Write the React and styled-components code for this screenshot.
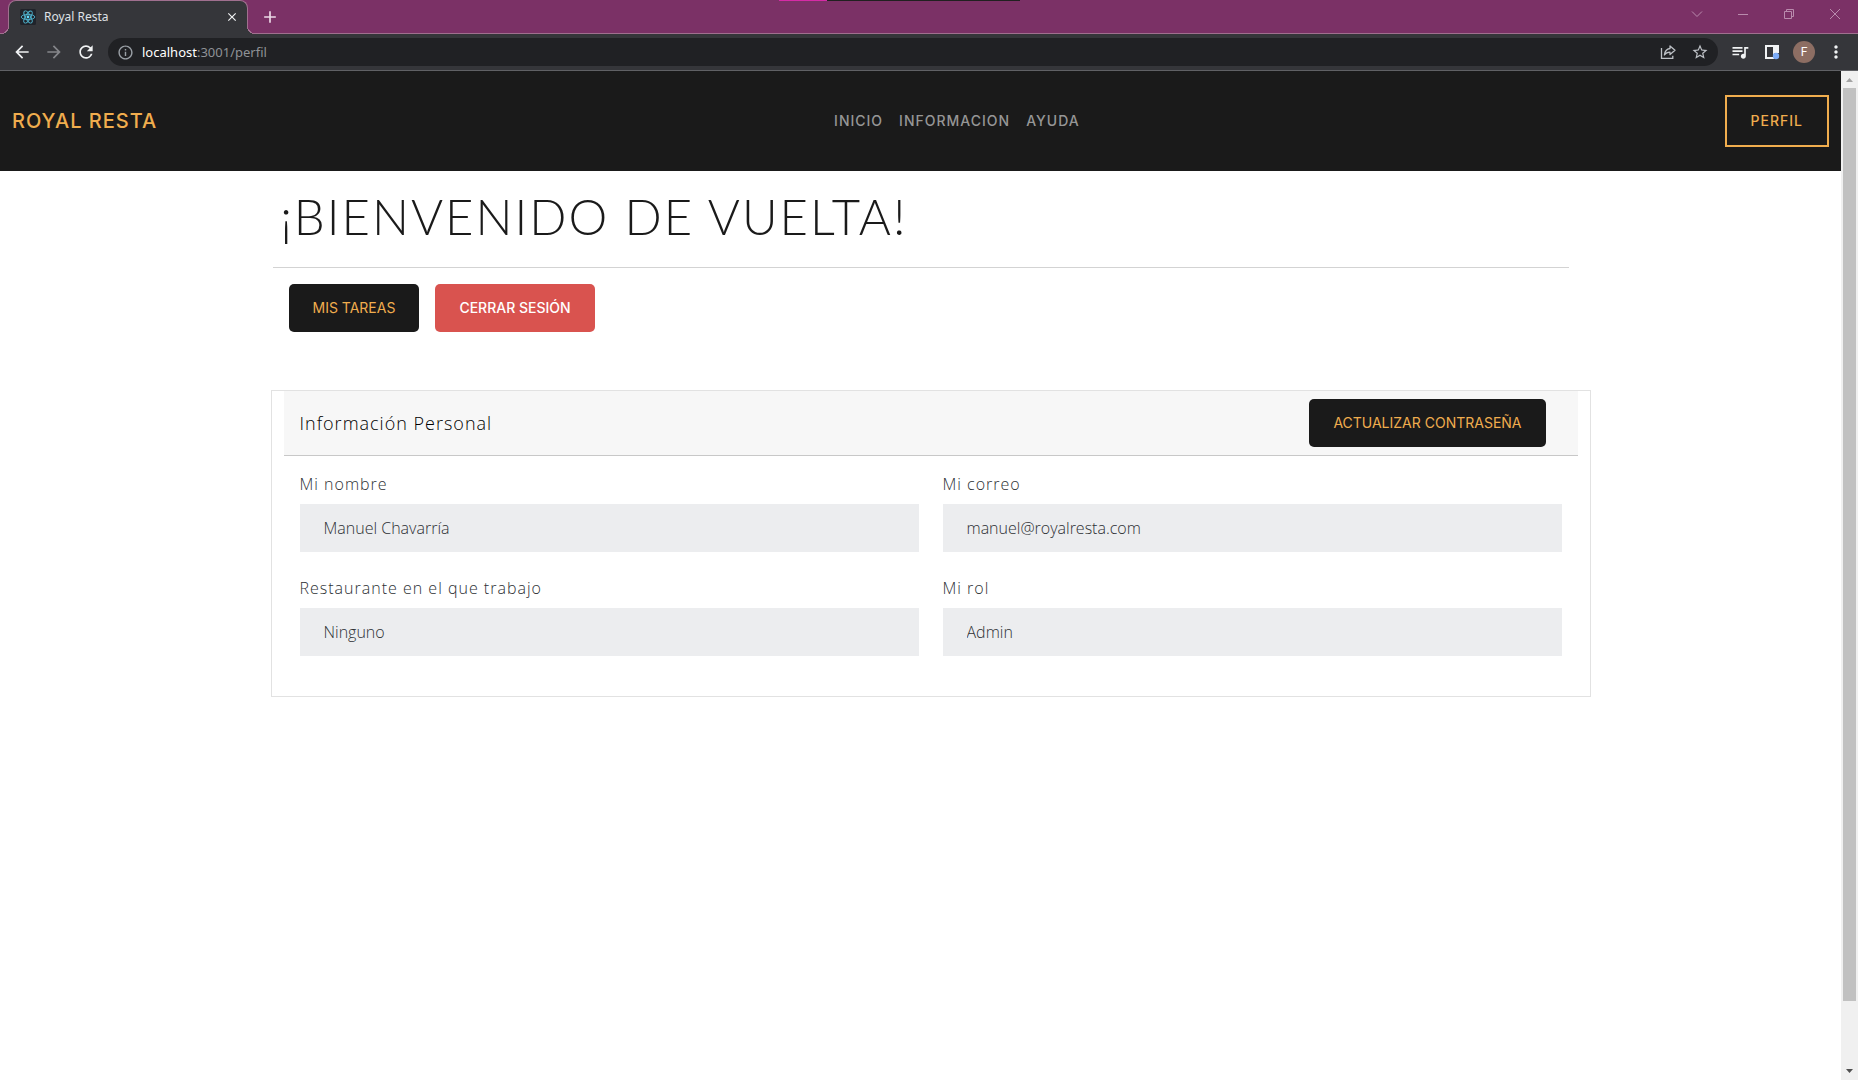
import React, { useId } from 'react';
import styled, { createGlobalStyle } from 'styled-components';
import { MdArrowBack, MdArrowForward, MdRefresh, MdInfoOutline, MdStarBorder, MdMoreVert, MdClose, MdAdd, MdQueueMusic } from 'react-icons/md';

const color = {
  frame: '#7b3166',
  frameLine: '#a0708f',
  toolbar: '#35363a',
  omnibox: '#202124',
  dark: '#1a1a1a',
  gold: '#f0ad4e',
  danger: '#d9534f',
  text: '#2c3034',
};
const uiFont = '"Noto Sans", "Open Sans", sans-serif';
const bodyFont = '"Open Sans", "Noto Sans", sans-serif';
const capsFont = 'Inter, "Open Sans", sans-serif';

const GlobalStyle = createGlobalStyle`
  *, *::before, *::after { box-sizing: border-box; }
  body { margin: 0; background: #fff; font-family: ${bodyFont}; }
  button { font: inherit; cursor: pointer; }
`;

const Browser = styled.div`
  display: flex;
  flex-direction: column;
  height: 100vh;
`;

const TabStrip = styled.header`
  position: relative;
  display: flex;
  align-items: stretch;
  height: 34px;
  flex: none;
  padding-left: 8px;
  background: ${color.frame};
  box-shadow: inset 0 -1px ${color.frameLine};
`;

const Glimpse = styled.div`
  position: absolute;
  top: 0;
  left: 41.9%;
  width: 13%;
  height: 1px;
  background: linear-gradient(to right, #d62ba6 20%, #202020 20%);
`;

const Tab = styled.div`
  position: relative;
  display: flex;
  align-items: center;
  gap: 8px;
  width: 240px;
  padding: 0 7px 2px 11px;
  border: 1px solid ${color.frameLine};
  border-bottom: 0;
  border-radius: 8px 8px 0 0;
  background: ${color.toolbar};
  color: #dfe1e5;
  font: 12px/16px ${uiFont};

  &::before, &::after {
    content: '';
    position: absolute;
    bottom: 0;
    width: 8px;
    height: 8px;
  }
  &::before {
    right: 100%;
    background: radial-gradient(circle at 0 0, transparent 7px, ${color.frameLine} 7px, ${color.frameLine} 8px, ${color.toolbar} 8px);
  }
  &::after {
    left: 100%;
    background: radial-gradient(circle at 100% 0, transparent 7px, ${color.frameLine} 7px, ${color.frameLine} 8px, ${color.toolbar} 8px);
  }
`;

const TabTitle = styled.span`
  flex: 1;
`;

const IconButton = styled.button`
  display: inline-flex;
  align-items: center;
  justify-content: center;
  flex: none;
  width: ${(p) => p.$width || 32}px;
  padding: 0;
  border: 0;
  background: none;
  color: ${(p) => p.$color || '#f1f3f4'};
`;

const NewTab = styled(IconButton)`
  margin-left: 6px;
  color: #ecd9e6;
`;

const WindowControls = styled.div`
  display: flex;
  height: 28px;
  margin-left: auto;
`;

const Toolbar = styled.div`
  display: flex;
  align-items: center;
  flex: none;
  height: 37px;
  padding: 0 6px 1px;
  background: ${color.toolbar};
  box-shadow: inset 0 -1px #606165;
`;

const AddressBar = styled.div`
  display: flex;
  align-items: center;
  flex: 1;
  height: 28px;
  margin: 0 6px;
  padding: 0 2px 0 9px;
  border-radius: 14px;
  background: ${color.omnibox};
  color: #9aa0a6;
`;

const Url = styled.span`
  flex: 1;
  margin-left: 8px;
  color: #8f9296;
  font: 13px/18px ${uiFont};

  b { color: #fff; font-weight: 400; }
`;

const Avatar = styled.span`
  display: flex;
  align-items: center;
  justify-content: center;
  width: 22px;
  height: 22px;
  border-radius: 50%;
  background: #8d6e63;
  color: #fff;
  font: 12px/22px Roboto, sans-serif;
`;

const Viewport = styled.div`
  display: flex;
  flex: 1;
  min-height: 0;
`;

const Page = styled.div`
  flex: 1;
  min-width: 0;
`;

const Navbar = styled.nav`
  display: flex;
  align-items: center;
  justify-content: space-between;
  height: 100px;
  padding: 0 12px;
  background: ${color.dark};
  font-family: ${capsFont};
`;

const Brand = styled.a`
  margin-right: 32px;
  color: ${color.gold};
  font-size: 20px;
  line-height: 28px;
  font-weight: 500;
  letter-spacing: 1px;
  text-decoration: none;
`;

const NavLinks = styled.div`
  display: flex;
  gap: 16px;
`;

const NavLink = styled.a`
  color: #969696;
  font-size: 14px;
  line-height: 20px;
  font-weight: 500;
  letter-spacing: 1px;
  text-decoration: none;
`;

const ProfileButton = styled.button`
  height: 52px;
  padding: 0 24px;
  border: 2px solid ${color.gold};
  background: transparent;
  color: ${color.gold};
  font-size: 14px;
  line-height: 20px;
  font-weight: 500;
  letter-spacing: 1px;
`;

const Container = styled.main`
  max-width: 1320px;
  margin: 0 auto;
  padding: 0 12px;
`;

const Title = styled.h1`
  margin: 0;
  padding: 16px 8px 22px;
  border-bottom: 1px solid #d3d3d3;
  color: ${color.dark};
  font: 300 49px/58px Lato, "Open Sans", sans-serif;
  letter-spacing: 2px;
`;

const Actions = styled.div`
  display: flex;
  gap: 16px;
  padding: 16px;
`;

const Button = styled.button`
  height: 48px;
  padding: 0 24px 1px;
  border: 0;
  border-radius: 5px;
  background: ${(p) => (p.$danger ? color.danger : color.dark)};
  color: ${(p) => (p.$danger ? '#fff' : color.gold)};
  font: ${(p) => (p.$danger ? 500 : 400)} 14px/20px ${capsFont};
`;

const Card = styled.section`
  min-width: calc(100% + 24px);
  margin: 42px -2px 0;
  padding: 0 12px 40px;
  border: 1px solid #e2e2e2;
`;

const CardHeader = styled.div`
  display: flex;
  align-items: center;
  justify-content: space-between;
  height: 65px;
  padding: 0 32px 0 16px;
  border-bottom: 1px solid #c8c8c8;
  background: #f7f7f7;
`;

const CardTitle = styled.h2`
  margin: 0;
  color: #000;
  font: 300 18px/24px ${bodyFont};
  letter-spacing: 1px;
`;

const Fields = styled.form`
  display: grid;
  grid-template-columns: 1fr 1fr;
  gap: 24px;
  padding: 16px 16px 0;
`;

const FieldBox = styled.div`
  display: flex;
  flex-direction: column;
  gap: 8px;
`;

const Label = styled.label`
  color: ${color.text};
  font: 300 16px/24px ${bodyFont};
  letter-spacing: 1px;
`;

const Input = styled.input`
  width: 100%;
  height: 48px;
  padding: 0 24px 1px;
  border: 0;
  border-radius: 0;
  background: #ecedef;
  color: ${color.text};
  font: 300 16px/24px ${bodyFont};
`;

const ScrollBar = styled.aside`
  display: flex;
  flex-direction: column;
  align-items: center;
  width: 17px;
  background: #f0f0f0;
`;

const ScrollArrow = styled.svg`
  flex: none;
  width: 17px;
  height: 17px;
`;

const ScrollTrack = styled.div`
  flex: 1;
  width: 13px;
`;

const ScrollThumb = styled.div`
  height: 93.6%;
  background: #c1c1c1;
`;

function ReactLogo() {
  return (
    <svg width="16" height="16" viewBox="0 0 16 16" aria-hidden="true">
      <rect width="16" height="16" rx="1.5" fill="#20232a" />
      <g fill="none" stroke="#4fb4cf" strokeWidth="0.9">
        <ellipse cx="8" cy="8" rx="6.8" ry="2.6" />
        <ellipse cx="8" cy="8" rx="6.8" ry="2.6" transform="rotate(60 8 8)" />
        <ellipse cx="8" cy="8" rx="6.8" ry="2.6" transform="rotate(120 8 8)" />
      </g>
      <circle cx="8" cy="8" r="1.4" fill="#61dafb" />
    </svg>
  );
}

function WindowIcon({ d }) {
  return (
    <svg width="12" height="12" viewBox="0 0 12 12" fill="none" stroke="#b98bad" aria-hidden="true">
      <path d={d} />
    </svg>
  );
}

function ShareIcon() {
  return (
    <svg width="16" height="16" viewBox="0 0 16 16" fill="none" stroke="#bdc1c6" strokeWidth="1.3" aria-hidden="true">
      <path d="M1.5 4v10.3h11.3v-2.5" />
      <path strokeLinejoin="round" d="M10 2l5 4.3-5 4.2V8.2c-2.6 0-4.3.8-5.6 2.8.4-3.6 2.3-6 5.600-6.5z" />
    </svg>
  );
}

function SidePanelIcon() {
  return (
    <svg width="16" height="16" viewBox="0 0 16 16" aria-hidden="true">
      <path fill="#f1f3f4" fillRule="evenodd" d="M1 1h14v8h-5v6H1zM3 3v10h6V3z" />
      <circle cx="12" cy="12" r="3.2" fill="#7cacf8" />
    </svg>
  );
}

function Field({ label, value }) {
  const id = useId();
  return (
    <FieldBox>
      <Label htmlFor={id}>{label}</Label>
      <Input id={id} type="text" defaultValue={value} readOnly />
    </FieldBox>
  );
}

export default function App() {
  return (
    <Browser>
      <GlobalStyle />
      <TabStrip>
        <Glimpse />
        <Tab>
          <ReactLogo />
          <TabTitle>Royal Resta</TabTitle>
          <IconButton $width={16} aria-label="Cerrar pestaña"><MdClose size={14} /></IconButton>
        </Tab>
        <NewTab aria-label="Nueva pestaña"><MdAdd size={20} /></NewTab>
        <WindowControls>
          <IconButton $width={46} aria-label="Buscar pestañas"><WindowIcon d="M1 3.5l5 5 5-5" /></IconButton>
          <IconButton $width={46} aria-label="Minimizar"><WindowIcon d="M1 6.5h10" /></IconButton>
          <IconButton $width={46} aria-label="Restaurar"><WindowIcon d="M1.5 3.5h7v7h-7zM3.5 3.5v-2h7v7h-2" /></IconButton>
          <IconButton $width={46} aria-label="Cerrar"><WindowIcon d="M1 1l10 10M11 1L1 11" /></IconButton>
        </WindowControls>
      </TabStrip>
      <Toolbar>
        <IconButton aria-label="Atrás"><MdArrowBack size={20} /></IconButton>
        <IconButton $color="#85868a" aria-label="Adelante"><MdArrowForward size={20} /></IconButton>
        <IconButton aria-label="Recargar"><MdRefresh size={20} /></IconButton>
        <AddressBar>
          <MdInfoOutline size={17} />
          <Url><b>localhost</b>:3001/perfil</Url>
          <IconButton aria-label="Compartir"><ShareIcon /></IconButton>
          <IconButton $color="#bdc1c6" aria-label="Favoritos"><MdStarBorder size={18} /></IconButton>
        </AddressBar>
        <IconButton aria-label="Multimedia"><MdQueueMusic size={20} /></IconButton>
        <IconButton aria-label="Panel lateral"><SidePanelIcon /></IconButton>
        <IconButton aria-label="Cuenta"><Avatar>F</Avatar></IconButton>
        <IconButton aria-label="Menú"><MdMoreVert size={20} /></IconButton>
      </Toolbar>
      <Viewport>
        <Page>
          <Navbar>
            <Brand href="#">ROYAL RESTA</Brand>
            <NavLinks>
              <NavLink href="#inicio">INICIO</NavLink>
              <NavLink href="#informacion">INFORMACION</NavLink>
              <NavLink href="#ayuda">AYUDA</NavLink>
            </NavLinks>
            <ProfileButton>PERFIL</ProfileButton>
          </Navbar>
          <Container>
            <Title>¡BIENVENIDO DE VUELTA!</Title>
            <Actions>
              <Button>MIS TAREAS</Button>
              <Button $danger>CERRAR SESIÓN</Button>
            </Actions>
            <Card>
              <CardHeader>
                <CardTitle>Información Personal</CardTitle>
                <Button>ACTUALIZAR CONTRASEÑA</Button>
              </CardHeader>
              <Fields>
                <Field label="Mi nombre" value="Manuel Chavarría" />
                <Field label="Mi correo" value="manuel@royalresta.com" />
                <Field label="Restaurante en el que trabajo" value="Ninguno" />
                <Field label="Mi rol" value="Admin" />
              </Fields>
            </Card>
          </Container>
        </Page>
        <ScrollBar>
          <ScrollArrow viewBox="0 0 17 17"><path fill="#a3a3a3" d="M5 11h7L8.5 7z" /></ScrollArrow>
          <ScrollTrack><ScrollThumb /></ScrollTrack>
          <ScrollArrow viewBox="0 0 17 17"><path fill="#505050" d="M5 6h7L8.5 10z" /></ScrollArrow>
        </ScrollBar>
      </Viewport>
    </Browser>
  );
}
